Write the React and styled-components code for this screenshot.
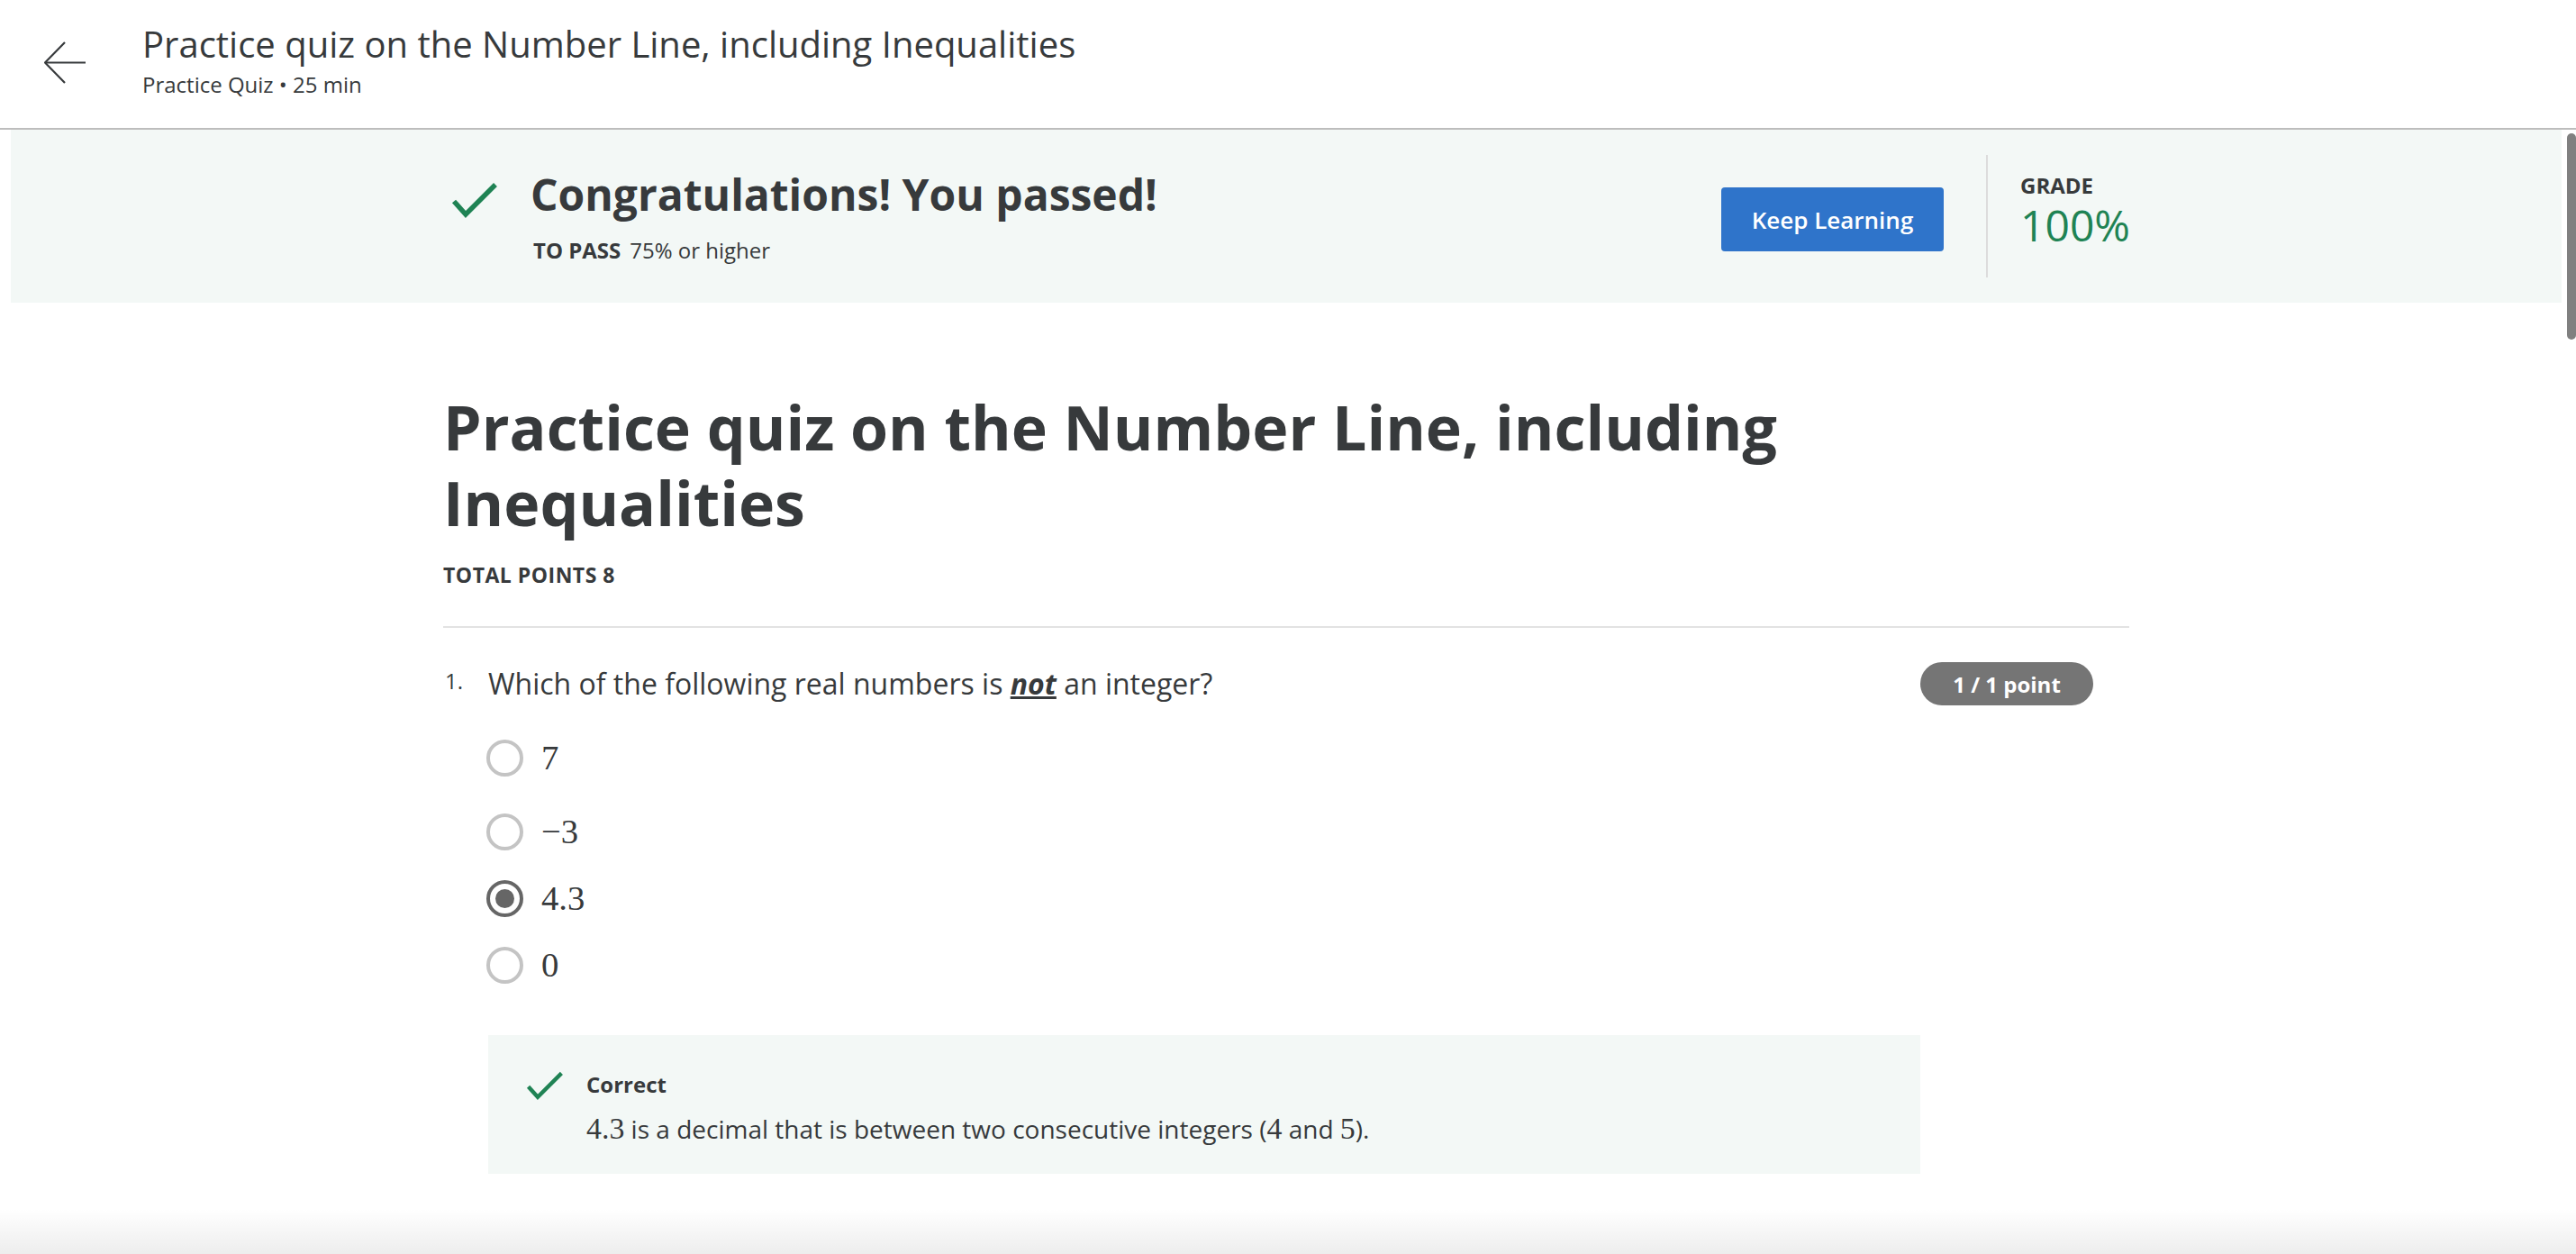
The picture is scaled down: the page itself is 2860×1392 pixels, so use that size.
import React from 'react';
import styled, { createGlobalStyle } from 'styled-components';

const colors = {
  text: '#373a3c',
  green: '#1f8354',
  mint: '#f3f8f6',
  blue: '#2f74ca',
  badge: '#757575',
};

const GlobalStyle = createGlobalStyle`
  html, body {
    margin: 0;
    padding: 0;
    height: 100%;
    overflow: hidden;
    background: #fff;
  }
  body {
    font-family: 'Open Sans', 'Liberation Sans', sans-serif;
    color: ${colors.text};
  }
  #root { height: 100%; }
  * { box-sizing: border-box; }
`;

const Page = styled.div`
  position: relative;
  display: flex;
  flex-direction: column;
  height: 100vh;
`;

const Header = styled.header`
  display: flex;
  flex-shrink: 0;
  height: 144px;
  padding-left: 49px;
  border-bottom: 2px solid #bdbdbd;
`;

const BackButton = styled.button`
  align-self: center;
  display: flex;
  padding: 0;
  margin-top: -2px;
  border: 0;
  background: none;
  cursor: pointer;
`;

const HeaderTitles = styled.div`
  margin-left: 62px;
  padding-top: 25px;
`;

const HeaderTitle = styled.div`
  font-size: 40px;
  line-height: 48px;
`;

const HeaderSub = styled.div`
  margin-top: 6px;
  font-size: 24px;
  line-height: 30px;
`;

const Main = styled.main`
  position: relative;
  flex: 1;
  overflow: hidden;
  padding: 0 16px 0 12px;
`;

const Column = styled.div`
  max-width: 1872px;
  margin: 0 auto;
`;

const Banner = styled.section`
  background: ${colors.mint};
  padding: 28px 0;
`;

const BannerRow = styled(Column)`
  display: flex;
  align-items: stretch;
  min-height: 136px;
`;

const PassBlock = styled.div`
  flex: 1;
  align-self: center;
  display: flex;
  align-items: flex-start;
  padding-left: 9px;
`;

const CheckIcon = styled.svg`
  flex-shrink: 0;
  margin-top: ${(p) => p.$top || 0}px;
  margin-right: ${(p) => p.$gap || 0}px;
`;

const PassHeading = styled.h2`
  margin: 0;
  font-size: 48px;
  line-height: 58px;
  font-weight: 700;
`;

const PassNote = styled.div`
  margin-top: 18px;
  font-size: 24px;
  line-height: 30px;
  padding-left: 3px;
  b {
    font-weight: 700;
    margin-right: 10px;
  }
`;

const PrimaryButton = styled.button`
  align-self: center;
  width: 247px;
  height: 71px;
  margin-top: 7px;
  border: 0;
  border-radius: 4px;
  background: ${colors.blue};
  color: #fff;
  font-family: inherit;
  font-size: 26px;
  font-weight: 600;
  cursor: pointer;
`;

const VDivider = styled.div`
  width: 2px;
  background: #dcdcdc;
  margin: 0 36px 0 47px;
`;

const GradeBlock = styled.div`
  align-self: center;
  width: 121px;
  padding-bottom: 6px;
`;

const Label = styled.div`
  font-size: ${(p) => p.$size || 24}px;
  line-height: ${(p) => p.$lh || 30}px;
  font-weight: 700;
  letter-spacing: ${(p) => p.$spacing || 0}px;
  text-transform: uppercase;
`;

const GradeValue = styled.div`
  font-size: 48px;
  line-height: 62px;
  color: ${colors.green};
`;

const QuizTitle = styled.h1`
  margin: 96px 0 0;
  font-size: 68px;
  line-height: 84px;
  font-weight: 700;
`;

const TotalPoints = styled(Label)`
  margin-top: 23px;
`;

const Rule = styled.hr`
  margin: 42px 0 0;
  border: 0;
  border-top: 2px solid #e2e2e2;
`;

const Question = styled.div`
  display: grid;
  grid-template-columns: 50px 1fr 192px;
  padding: 40px 40px 0 0;
`;

const QNumber = styled.div`
  margin-top: 4px;
  font-size: 24px;
  line-height: 30px;
  padding-left: 2px;
`;

const QBody = styled.div``;

const QText = styled.div`
  font-size: 32px;
  line-height: 44px;
  em {
    font-weight: 700;
    text-decoration: underline;
  }
`;

const PointsBadge = styled.div`
  align-self: start;
  height: 48px;
  margin-top: -2px;
  border-radius: 24px;
  background: ${colors.badge};
  color: #fff;
  display: flex;
  align-items: center;
  justify-content: center;
  font-size: 24px;
  font-weight: 700;
`;

const Options = styled.div`
  margin-top: 23px;
`;

const Option = styled.label`
  display: flex;
  align-items: center;
  height: 74px;
  font-size: 32px;
  line-height: 44px;
  &:first-child {
    margin-bottom: 8px;
  }
`;

const Radio = styled.span`
  position: relative;
  width: 41px;
  height: 41px;
  border-radius: 50%;
  border: 4px solid ${(p) => (p.$checked ? '#666' : '#c4c4c4')};
  margin-right: 20px;
  margin-left: -2px;
  &::after {
    content: '';
    display: ${(p) => (p.$checked ? 'block' : 'none')};
    position: absolute;
    inset: 6px;
    border-radius: 50%;
    background: #666;
  }
`;

const Math = styled.span`
  font-family: 'Liberation Serif', 'DejaVu Serif', serif;
  font-size: 1.21em;
  line-height: 1;
`;

const Feedback = styled.div`
  display: flex;
  margin-top: 41px;
  padding: 40px 40px 31px 42px;
  background: ${colors.mint};
`;

const FeedbackText = styled.div`
  margin-left: 25px;
`;

const FeedbackTitle = styled.div`
  font-size: 24px;
  line-height: 30px;
  font-weight: 700;
`;

const FeedbackBody = styled.div`
  margin-top: 15px;
  font-size: 28px;
  line-height: 38px;
`;

const ScrollThumb = styled.div`
  position: absolute;
  top: 4px;
  right: 0;
  width: 10px;
  height: 229px;
  border-radius: 5px;
  background: #808080;
`;

const BottomShade = styled.div`
  position: absolute;
  left: 0;
  right: 0;
  bottom: 0;
  height: 50px;
  background: linear-gradient(to bottom, rgba(0, 0, 0, 0), rgba(0, 0, 0, 0.07));
  pointer-events: none;
`;

function Check({ width, height, top, gap, stroke = 5.5 }) {
  return (
    <CheckIcon width={width} height={height} viewBox="0 0 52 40" $top={top} $gap={gap}>
      <polyline
        points="3,21.5 16,36 49,3"
        fill="none"
        stroke={colors.green}
        strokeWidth={stroke}
        strokeLinecap="butt"
      />
    </CheckIcon>
  );
}

const options = [
  { label: '7' },
  { label: '−3' },
  { label: '4.3', checked: true },
  { label: '0' },
];

export default function App() {
  return (
    <Page>
      <GlobalStyle />
      <Header>
        <BackButton aria-label="Back">
          <svg width="47" height="48" viewBox="0 0 47 48">
            <polyline points="23,1 1,23.5 23,46" fill="none" stroke={colors.text} strokeWidth="2.2" />
            <line x1="1" y1="23.5" x2="46" y2="23.5" stroke={colors.text} strokeWidth="2.2" />
          </svg>
        </BackButton>
        <HeaderTitles>
          <HeaderTitle>Practice quiz on the Number Line, including Inequalities</HeaderTitle>
          <HeaderSub>Practice Quiz • 25 min</HeaderSub>
        </HeaderTitles>
      </Header>

      <Main>
        <Banner>
          <BannerRow>
            <PassBlock>
              <Check width={52} height={40} top={15} gap={36} />
              <div>
                <PassHeading>Congratulations! You passed!</PassHeading>
                <PassNote>
                  <b>TO PASS</b>75% or higher
                </PassNote>
              </div>
            </PassBlock>
            <PrimaryButton>Keep Learning</PrimaryButton>
            <VDivider />
            <GradeBlock>
              <Label $lh={26}>Grade</Label>
              <GradeValue>100%</GradeValue>
            </GradeBlock>
          </BannerRow>
        </Banner>

        <Column>
          <QuizTitle>Practice quiz on the Number Line, including Inequalities</QuizTitle>
          <TotalPoints $size={23} $spacing={0.5}>Total points 8</TotalPoints>
          <Rule />

          <Question>
            <QNumber>1.</QNumber>
            <QBody>
              <QText>
                Which of the following real numbers is <em>not</em> an integer?
              </QText>
              <Options>
                {options.map((o) => (
                  <Option key={o.label}>
                    <Radio $checked={o.checked} />
                    <Math>{o.label}</Math>
                  </Option>
                ))}
              </Options>
              <Feedback>
                <Check width={42} height={32} stroke={5.5} />
                <FeedbackText>
                  <FeedbackTitle>Correct</FeedbackTitle>
                  <FeedbackBody>
                    <Math>4.3</Math> is a decimal that is between two consecutive integers (<Math>4</Math> and{' '}
                    <Math>5</Math>).
                  </FeedbackBody>
                </FeedbackText>
              </Feedback>
            </QBody>
            <PointsBadge>1 / 1 point</PointsBadge>
          </Question>
        </Column>

        <ScrollThumb />
      </Main>
      <BottomShade />
    </Page>
  );
}
